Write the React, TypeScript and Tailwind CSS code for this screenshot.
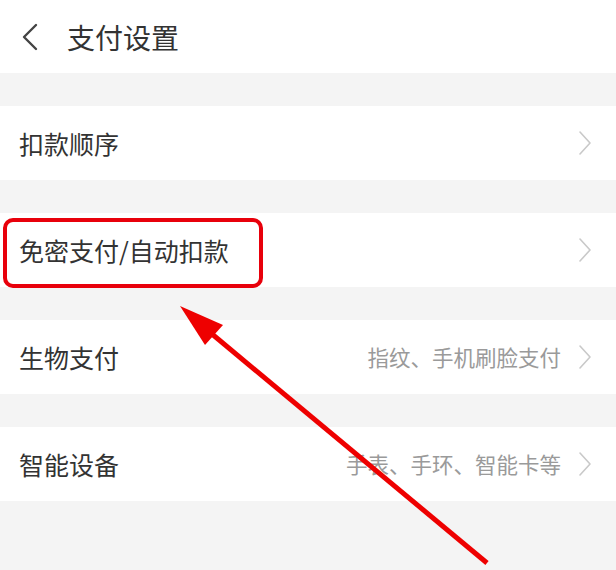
const rows = [
  { title: "扣款顺序", hint: "" },
  { title: "免密支付/自动扣款", hint: "" },
  { title: "生物支付", hint: "指纹、手机刷脸支付" },
  { title: "智能设备", hint: "手表、手环、智能卡等" },
];

function Chevron() {
  return (
    <svg width="14" height="26" viewBox="0 0 14 26" fill="none" className="shrink-0">
      <path d="M2 2 L12 13 L2 24" stroke="#c9c9c9" strokeWidth="1.6" strokeLinecap="round" strokeLinejoin="round" />
    </svg>
  );
}

export default function App() {
  return (
    <div
      className="relative w-[616px] h-[570px] overflow-hidden bg-[#f4f4f4] text-[#333]"
      style={{ fontFamily: '"Noto Sans CJK SC", "Noto Sans", sans-serif' }}
    >
      <div className="h-[73px] bg-white flex items-center pl-[21px]">
        <svg width="18" height="28" viewBox="0 0 18 28" fill="none">
          <path d="M15 2 L3 14 L15 26" stroke="#444" strokeWidth="2.4" strokeLinecap="round" strokeLinejoin="round" />
        </svg>
        <span className="ml-[28px] text-[28px] leading-none text-[#333]">支付设置</span>
      </div>

      <div className="flex flex-col gap-[33px] pt-[33px]">
        {rows.map((r) => (
          <div key={r.title} className="h-[74px] bg-white flex items-center pl-[19px] pr-[24px]">
            <span className="flex-1 text-[25px] leading-none">{r.title}</span>
            {r.hint && <span className="text-[21.5px] leading-none text-[#9a9a9a] mr-[17px]">{r.hint}</span>}
            <Chevron />
          </div>
        ))}
      </div>

      {/* red highlight box */}
      <div className="absolute left-[3px] top-[218px] w-[260px] h-[70px] border-[4px] border-[#e8000b] rounded-[10px]" />

      {/* arrow */}
      <svg className="absolute left-0 top-0" width="616" height="570" viewBox="0 0 616 570">
        <line x1="200" y1="324" x2="487" y2="563" stroke="#ee0000" strokeWidth="5" />
        <polygon points="180,306 223,325 205,345" fill="#ee0000" />
      </svg>
    </div>
  );
}
